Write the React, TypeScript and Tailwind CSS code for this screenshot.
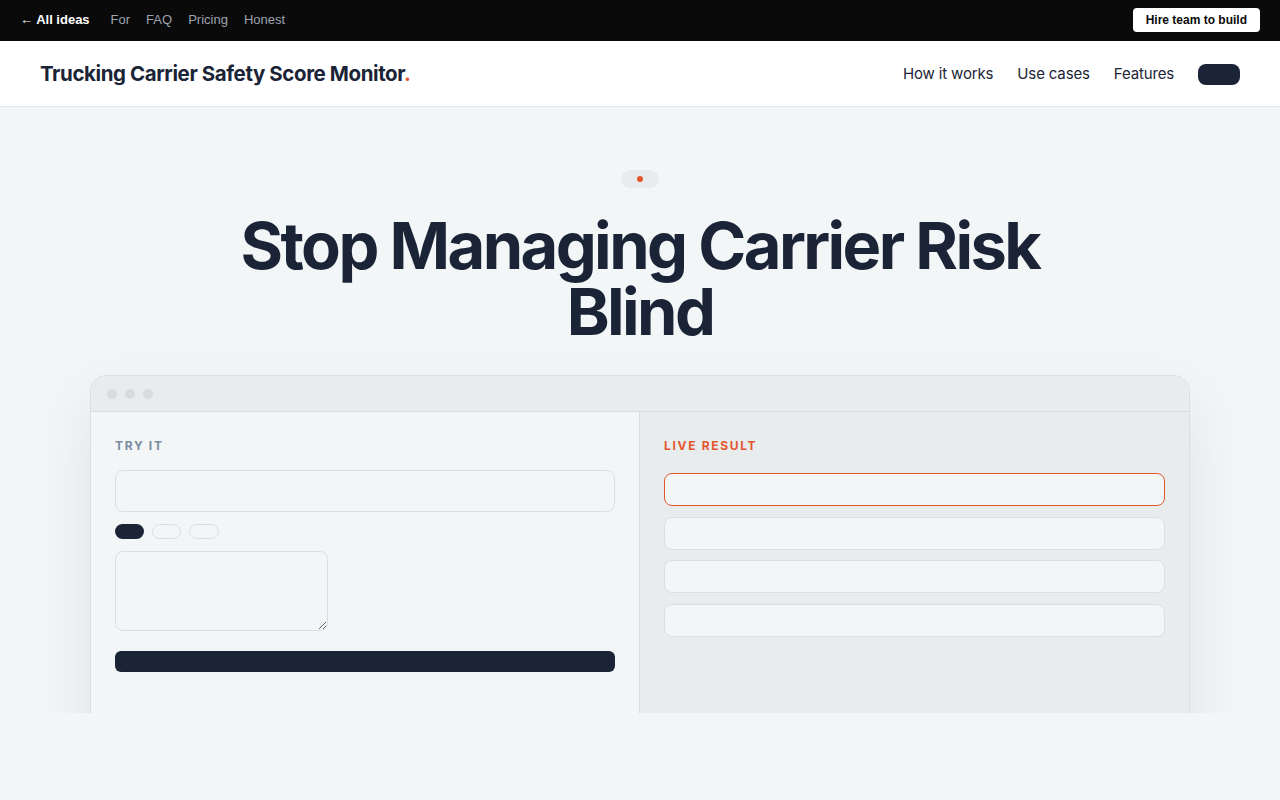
import { FC } from 'react';

const TopBar: FC = () => (
  <div className="flex h-[41px] items-center justify-between bg-[#0a0a0a] px-5 pb-px font-['Liberation_Sans',Arial,sans-serif] text-[13px]">
    <div className="flex items-center">
      <a className="font-bold text-white">← All ideas</a>
      <nav className="ml-[21px] flex items-center gap-4 text-[#9ca3af]">
        <a>For</a>
        <a>FAQ</a>
        <a>Pricing</a>
        <a>Honest</a>
      </nav>
    </div>
    <button className="h-6 rounded-[4px] bg-white px-[13px] text-[12px] font-bold text-[#0a0a0a]">
      Hire team to build
    </button>
  </div>
);

const Header: FC = () => (
  <header className="flex h-[66px] items-center justify-between border-b border-[#e3e7ea] bg-white px-10 font-['Inter',sans-serif]">
    <div className="pt-[2px] text-[20.5px] font-bold tracking-[-0.02em] text-[#1b2437]">
      Trucking Carrier Safety Score Monitor<span className="text-[#e4572e]">.</span>
    </div>
    <nav className="flex items-center pt-[2px] text-[15px] tracking-[-0.01em] text-[#1b2437]">
      <a className="mr-6">How it works</a>
      <a className="mr-6">Use cases</a>
      <a className="mr-6">Features</a>
      <button className="h-[21px] w-[42px] rounded-lg bg-[#1b2437]" />
    </nav>
  </header>
);

const ResultRow: FC<{ active?: boolean }> = ({ active }) => (
  <div
    className={
      active
        ? 'h-[33px] rounded-lg border border-[#e4572e] bg-[#f3f6f7]'
        : 'h-[33px] rounded-lg border border-[#dcdfe1] bg-[#f3f6f7]'
    }
  />
);

const DemoWindow: FC = () => (
  <div className="mx-auto mt-[30px] w-[1100px] overflow-hidden rounded-[16px] border border-[#dcdfe1] bg-[#f3f6f7] shadow-[0_24px_60px_rgba(15,23,42,0.08)]">
    {/* window chrome */}
    <div className="flex h-9 items-center gap-2 border-b border-[#d9dcde] bg-[#e8eced] px-4">
      <span className="h-[10px] w-[10px] rounded-full bg-[#d9dcde]" />
      <span className="h-[10px] w-[10px] rounded-full bg-[#d9dcde]" />
      <span className="h-[10px] w-[10px] rounded-full bg-[#d9dcde]" />
    </div>

    <div className="grid h-[400px] grid-cols-2">
      {/* left: input side */}
      <div className="border-r border-[#d9dcde] px-6 pt-[25px]">
        <div className="font-['Inter',sans-serif] text-[12px] font-bold tracking-[0.14em] text-[#7b8ca0]">TRY IT</div>
        <div className="mt-[15px] h-[42px] w-full rounded-lg border border-[#dcdfe1] bg-[#f3f6f7]" />
        <div className="mt-3 flex gap-2">
          <span className="h-[15px] w-[29px] rounded-full bg-[#1b2437]" />
          <span className="h-[15px] w-[29px] rounded-full border border-[#dcdfe1]" />
          <span className="h-[15px] w-[30px] rounded-full border border-[#dcdfe1]" />
        </div>
        <textarea className="mt-3 block h-[80px] w-[213px] rounded-lg border border-[#dcdfe1] bg-[#f3f6f7] outline-none" />
        <div className="mt-5 h-[21px] w-full rounded-md bg-[#1b2437]" />
      </div>

      {/* right: result side */}
      <div className="bg-[#e8eced] px-6 pt-[25px]">
        <div className="font-['Inter',sans-serif] text-[12px] font-bold tracking-[0.14em] text-[#e4572e]">LIVE RESULT</div>
        <div className="mt-[18px] flex flex-col gap-[10.5px]">
          <ResultRow active />
          <ResultRow />
          <ResultRow />
          <ResultRow />
        </div>
      </div>
    </div>
  </div>
);

export default function App() {
  return (
    <div className="min-h-[800px] bg-[#f3f6f7]">
      <TopBar />
      <Header />
      <section className="h-[606px] overflow-hidden pt-[63px] font-['Inter',sans-serif]">
        <div className="flex justify-center">
          <span className="flex h-[18px] w-[38px] items-center justify-center rounded-full bg-[#e8ecee]">
            <span className="h-[6px] w-[6px] rounded-full bg-[#e4572e]" />
          </span>
        </div>
        <h1 className="mx-auto mt-[25px] max-w-[900px] text-center text-[65px] font-bold leading-[66px] tracking-[-0.04em] text-[#1b2437]">
          Stop Managing Carrier Risk Blind
        </h1>
        <DemoWindow />
      </section>
    </div>
  );
}
